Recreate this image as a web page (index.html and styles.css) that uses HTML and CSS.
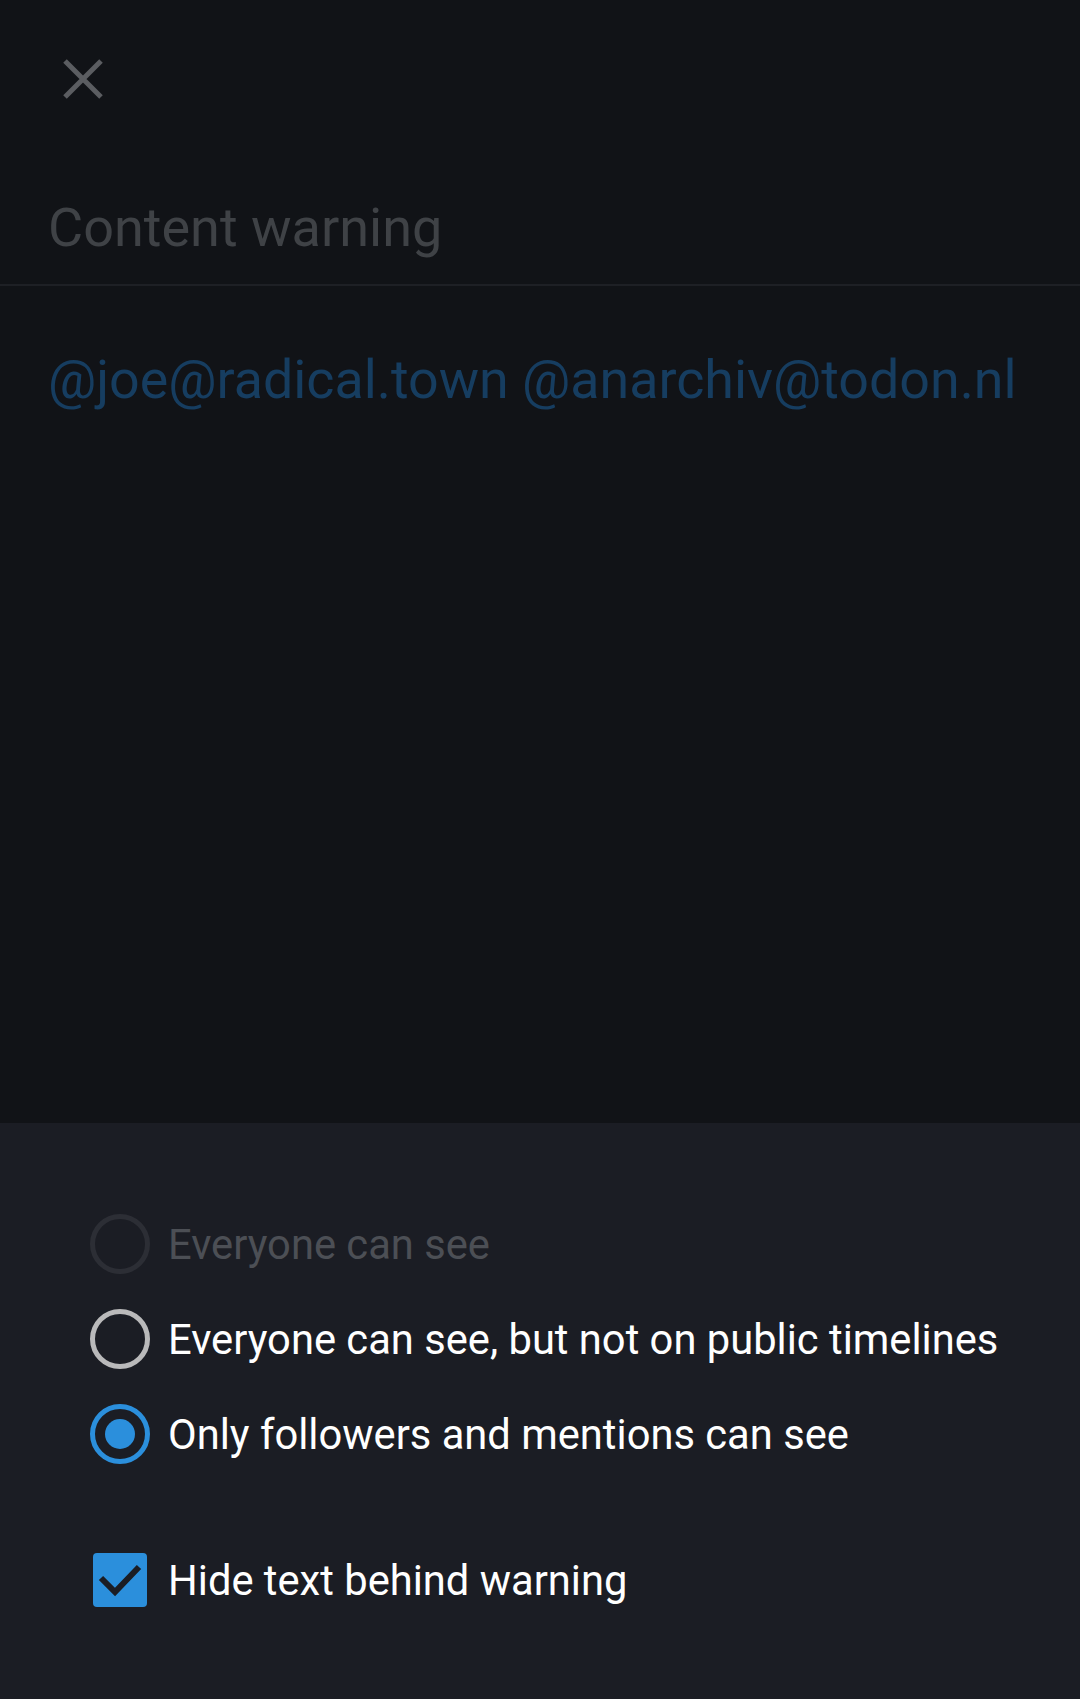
FILE: index.html
```html
<!DOCTYPE html>
<html lang="en">
<head>
<meta charset="utf-8">
<title>Compose</title>
<link rel="stylesheet" href="styles.css">
</head>
<body>
<div class="screen">
  <header class="topbar">
    <button class="close" aria-label="Close">
      <svg width="40" height="40" viewBox="0 0 40 40"><path d="M2 2 L38 38 M38 2 L2 38" stroke="#5b5d61" stroke-width="5" fill="none"/></svg>
    </button>
  </header>
  <div class="cw-field">Content warning</div>
  <div class="body-text">@joe@radical.town @anarchiv@todon.nl</div>
  <div class="spacer"></div>
  <section class="panel">
    <div class="options">
      <div class="row disabled"><span class="radio"></span><span class="label">Everyone can see</span></div>
      <div class="row"><span class="radio"></span><span class="label">Everyone can see, but not on public timelines</span></div>
      <div class="row"><span class="radio checked"><span class="dot"></span></span><span class="label">Only followers and mentions can see</span></div>
    </div>
    <div class="row check-row">
      <span class="checkbox">
        <svg width="54" height="54" viewBox="0 0 54 54"><path d="M8 25 L22 39 L46 14" stroke="#1b1d24" stroke-width="6" fill="none"/></svg>
      </span>
      <span class="label">Hide text behind warning</span>
    </div>
  </section>
</div>
</body>
</html>
```

FILE: styles.css
```css
html, body {
  margin: 0;
  padding: 0;
  background: #111317;
}
body {
  font-family: Roboto, "Noto Sans", sans-serif;
}
.screen {
  display: flex;
  flex-direction: column;
  min-height: 1699px;
}
.topbar {
  height: 140px;
  display: flex;
  align-items: flex-start;
}
.close {
  margin: 59px 0 0 63px;
  padding: 0;
  border: 0;
  background: transparent;
  width: 40px;
  height: 40px;
  display: block;
}
.close svg { display: block; }
.cw-field {
  font-size: 54px;
  line-height: 64px;
  color: #3f4246;
  padding: 56px 48px 24px;
  border-bottom: 2px solid #1e2025;
}
.body-text {
  font-size: 53.75px;
  line-height: 64px;
  color: #163d60;
  padding: 62px 48px 0;
  white-space: nowrap;
}
.spacer { flex: 1; }
.panel {
  background: #1b1d24;
  height: 576px;
  box-sizing: border-box;
  padding: 73px 0 0 90px;
}
.options {
  display: flex;
  flex-direction: column;
  margin-bottom: 51px;
}
.row {
  height: 95px;
  display: flex;
  align-items: center;
  gap: 18px;
}
.radio {
  width: 60px;
  height: 60px;
  box-sizing: border-box;
  border: 5px solid #b9b9ba;
  border-radius: 50%;
  display: flex;
  align-items: center;
  justify-content: center;
  flex: none;
}
.radio.checked { border-color: #2b8fdc; }
.dot {
  width: 30px;
  height: 30px;
  border-radius: 50%;
  background: #2b8fdc;
}
.label {
  font-size: 41.7px;
  color: #ffffff;
  line-height: 50px;
  white-space: nowrap;
  padding-top: 2px;
}
.disabled .radio { border-color: #2c2e35; }
.disabled .label { color: #4c4f55; }
.check-row .checkbox {
  width: 54px;
  height: 54px;
  margin: 0 3px;
  border-radius: 4px;
  background: #2b8fdc;
  flex: none;
}
.checkbox svg { display: block; }
.check-row { gap: 18px; }
```
